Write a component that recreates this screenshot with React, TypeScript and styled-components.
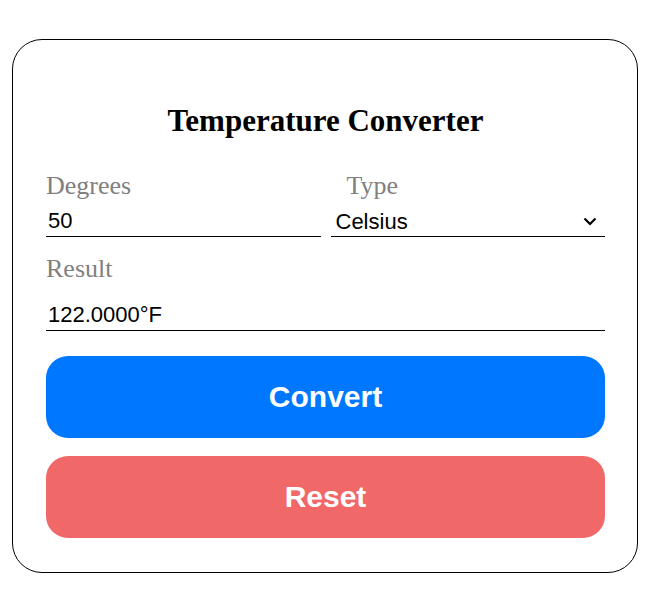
import React, { useState } from "react";
import styled, { createGlobalStyle } from "styled-components";

const Global = createGlobalStyle`
  html, body { margin: 0; padding: 0; background: #fff; }
  body { font-family: "Liberation Serif", "Times New Roman", serif; }
`;

const Page = styled.div`
  padding: 39px 10px 20px 12px;
`;

const Card = styled.div`
  border: 1px solid #000;
  border-radius: 30px;
  padding: 64px 32px 34px 33px;
  display: flex;
  flex-direction: column;
`;

const Title = styled.h2`
  margin: 0 0 33px;
  font-family: "Liberation Serif", "Times New Roman", serif;
  font-size: 31px;
  font-weight: bold;
  text-align: center;
  color: #000;
  line-height: 34px;
`;

const Row = styled.div`
  display: grid;
  grid-template-columns: 1fr 1fr;
  column-gap: 10px;
`;

const Field = styled.div<{ $indent?: number }>`
  display: flex;
  flex-direction: column;
  & > label {
    padding-left: ${(p) => p.$indent ?? 0}px;
  }
`;

const Label = styled.label`
  font-family: "Liberation Serif", "Times New Roman", serif;
  font-size: 26px;
  color: #808080;
  line-height: 30px;
  margin-bottom: 6px;
`;

const Input = styled.input`
  font-family: "Liberation Sans", Arial, sans-serif;
  font-size: 22px;
  color: #000;
  border: none;
  border-bottom: 1px solid #000;
  padding: 1px 2px 2px;
  outline: none;
  background: transparent;
  width: 100%;
  box-sizing: border-box;
`;

const SelectWrap = styled.div`
  position: relative;
  flex: 1;
  border-bottom: 1px solid #000;
  box-sizing: border-box;
  display: flex;
  align-items: center;
`;

const Select = styled.select`
  appearance: none;
  font-family: "Liberation Sans", Arial, sans-serif;
  font-size: 22px;
  color: #000;
  border: none;
  background: transparent;
  padding: 0 4px 0 5px;
  width: 100%;
  height: 27px;
  outline: none;
`;

const Chevron = styled.svg`
  position: absolute;
  right: 8px;
  top: 10px;
  pointer-events: none;
`;

const ResultBlock = styled.div`
  display: flex;
  flex-direction: column;
  margin-top: 17px;
`;

const ResultLabel = styled(Label)`
  margin-bottom: 17px;
`;

const Button = styled.button<{ $bg: string }>`
  border: none;
  border-radius: 22px;
  background: ${(p) => p.$bg};
  color: #fff;
  font-family: "Liberation Sans", Arial, sans-serif;
  font-weight: bold;
  font-size: 30px;
  height: 82px;
  width: 100%;
  cursor: pointer;
`;

const Buttons = styled.div`
  display: flex;
  flex-direction: column;
  gap: 18px;
  margin-top: 25px;
`;

export default function App() {
  const [deg, setDeg] = useState("50");
  const [type, setType] = useState("Celsius");
  const [res, setRes] = useState("122.0000°F");
  return (
    <>
      <Global />
      <Page>
        <Card>
          <Title>Temperature Converter</Title>
          <Row>
            <Field>
              <Label>Degrees</Label>
              <Input value={deg} onChange={(e) => setDeg(e.target.value)} />
            </Field>
            <Field $indent={16}>
              <Label>Type</Label>
              <SelectWrap>
                <Select value={type} onChange={(e) => setType(e.target.value)}>
                  <option>Celsius</option>
                  <option>Fahrenheit</option>
                </Select>
                <Chevron width="14" height="9" viewBox="0 0 14 9">
                  <path d="M1.5 1.5 L7 7 L12.5 1.5" fill="none" stroke="#000" strokeWidth="2.2" />
                </Chevron>
              </SelectWrap>
            </Field>
          </Row>
          <ResultBlock>
            <ResultLabel>Result</ResultLabel>
            <Input value={res} readOnly onChange={(e) => setRes(e.target.value)} />
          </ResultBlock>
          <Buttons>
            <Button $bg="#0077ff">Convert</Button>
            <Button $bg="#f06868" onClick={() => { setDeg(""); setRes(""); }}>Reset</Button>
          </Buttons>
        </Card>
      </Page>
    </>
  );
}
